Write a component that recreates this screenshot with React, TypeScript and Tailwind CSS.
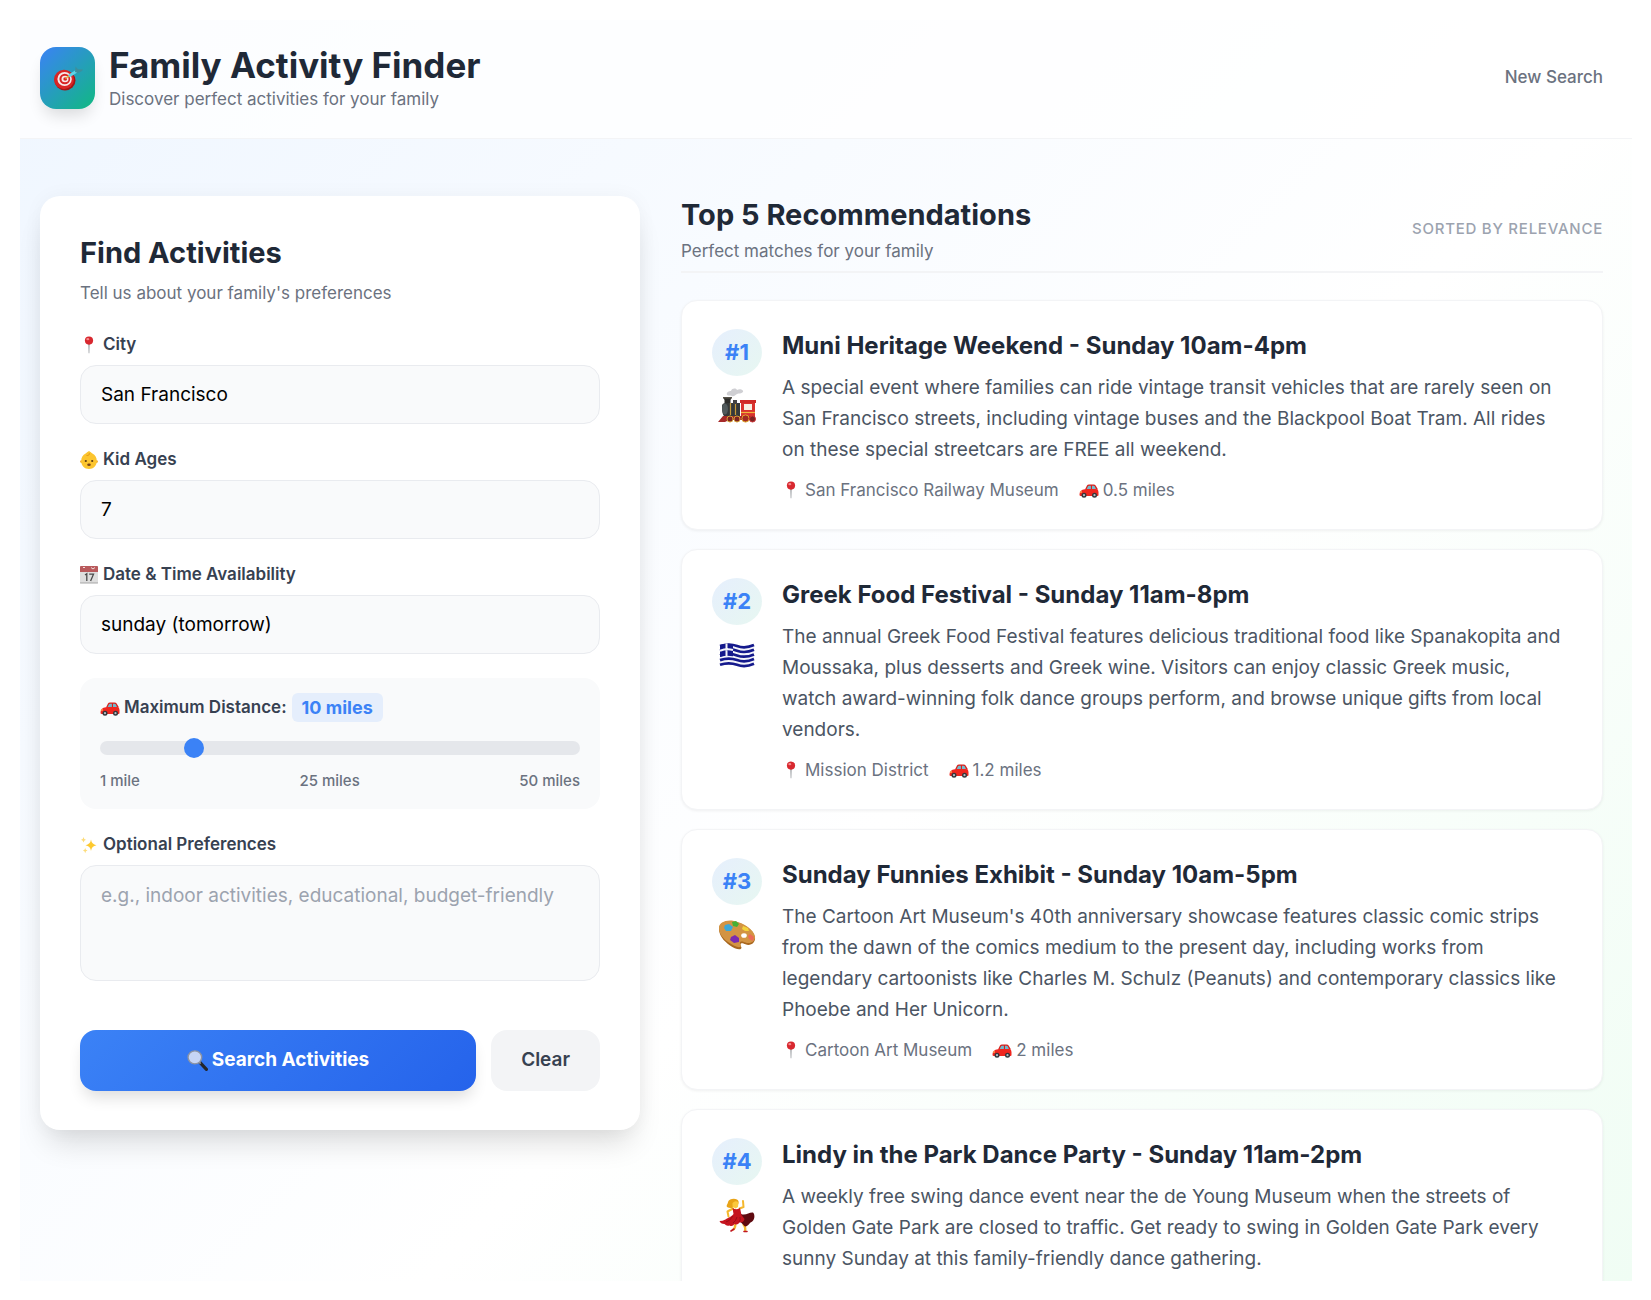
import type { ReactNode } from "react";

function PinIcon({ className }: { className?: string }) {
  return (
    <svg viewBox="0 0 18 18" className={className} aria-hidden="true">
      <path d="M8.4 8h1.2l-.3 9.2h-.6z" fill="#8b8f94" />
      <circle cx="9" cy="4.6" r="4.1" fill="#d8282f" />
      <ellipse cx="7.8" cy="3.2" rx="1.5" ry="1.1" fill="#f58a8c" />
    </svg>
  );
}

function BabyIcon({ className }: { className?: string }) {
  return (
    <svg viewBox="0 0 18 18" className={className} aria-hidden="true">
      <circle cx="1.4" cy="10.6" r="1.3" fill="#f0a92a" />
      <circle cx="16.6" cy="10.6" r="1.3" fill="#f0a92a" />
      <path
        d="M9 0c1.600 1 2.400 1.800 3.400 2.600C15.200 4 16.800 6.600 16.800 10c0 4.500-3.300 8-7.800 8s-7.800-3.500-7.800-8c0-3.400 1.600-6 4.400-7.400C6.600 1.800 7.400 1 9 0z"
        fill="#fcc52f"
      />
      <path d="M6.500 4.400C8.500 4.800 9.700 3.800 9.300 2.200" fill="none" stroke="#d98c14" strokeWidth=".8" />
      <circle cx="5.800" cy="10" r="1.100" fill="#5b3a12" />
      <circle cx="12.200" cy="10" r="1.100" fill="#5b3a12" />
      <ellipse cx="9" cy="13.800" rx="1.800" ry="1.200" fill="#7a4317" />
    </svg>
  );
}

function CalendarIcon({ className }: { className?: string }) {
  return (
    <svg viewBox="0 0 18 18" className={className} aria-hidden="true">
      <rect width="18" height="18" rx="1" fill="#dedede" />
      <path d="M1 0h16a1 1 0 0 1 1 1v5H0V1a1 1 0 0 1 1-1z" fill="#b95a5c" />
      <path d="M3 1.500h2M11 1.500l2 1.500 2-1.500" stroke="#f3dede" fill="none" />
      <path d="M5 9l1.800-1.200V15M9.200 8.200h4.300L10.600 15" fill="none" stroke="#4a4a4a" strokeWidth="1.300" />
      <path d="M0 16.800h18" stroke="#b5b5b5" />
    </svg>
  );
}

function CarIcon({ className }: { className?: string }) {
  return (
    <svg viewBox="0 0 20 18" className={className} aria-hidden="true">
      <path d="M6 8.500 8 4.600Q8.500 3.500 10 3.500h4.500q1.500 0 2.300 1.200L19 8.500z" fill="#d81f1a" />
      <path d="M7.400 8.400 9 5.300q.3-.6 1-.6h1.900v3.700zM13 4.700h1.500q.8 0 1.200.6l1.500 3.100H13z" fill="#74b8cc" />
      <path d="M1 10.500Q3 8 7 8h10.500q2 .5 2 3v3q0 1-1 1H1.500q-1 0-1-1.500z" fill="#f0261f" />
      <circle cx="5" cy="14.200" r="2.500" fill="#33363b" />
      <circle cx="15.500" cy="14.200" r="2.500" fill="#33363b" />
      <circle cx="5" cy="14.200" r="1.100" fill="#b9bec4" />
      <circle cx="15.500" cy="14.200" r="1.100" fill="#b9bec4" />
      <path d="M1 11h2" stroke="#ffd36b" strokeWidth="1" />
    </svg>
  );
}

function SparklesIcon({ className }: { className?: string }) {
  return (
    <svg viewBox="0 0 18 18" className={className} aria-hidden="true">
      <path d="M11 3.500q.6 4.900 5.500 5.700-4.900.8-5.500 5.800-.6-5-5.500-5.800 4.900-.8 5.500-5.700z" fill="#fdc92f" />
      <path
        d="M3.500 1q.3 2.400 2.500 2.800-2.200.4-2.500 2.800Q3.200 4.200 1 3.800 3.200 3.400 3.500 1zM5.200 12q.3 2.200 2.300 2.600-2 .4-2.300 2.600-.3-2.200-2.300-2.600 2-.4 2.300-2.600z"
        fill="#fddc7a"
      />
    </svg>
  );
}

function SearchIcon({ className }: { className?: string }) {
  return (
    <svg viewBox="0 0 20 20" className={className} aria-hidden="true">
      <path d="m12.500 12 6 6.500" stroke="#24262b" strokeWidth="3" strokeLinecap="round" />
      <path d="m11 11 2 2" stroke="#8b8f98" strokeWidth="1.600" />
      <ellipse cx="7.500" cy="7" rx="6.500" ry="6.200" fill="#c6d5f5" stroke="#8d94a3" strokeWidth="1.300" />
    </svg>
  );
}

function TargetIcon({ className }: { className?: string }) {
  return (
    <svg viewBox="0 0 30 26" className={className} aria-hidden="true">
      <ellipse cx="12" cy="15.500" rx="10.500" ry="10" fill="#a31515" />
      <ellipse cx="11" cy="14.500" rx="10" ry="9.700" fill="#d92525" />
      <ellipse cx="11.600" cy="14" rx="7.200" ry="7" fill="#f7e9e9" />
      <ellipse cx="11.800" cy="14" rx="5.400" ry="5.200" fill="#d92525" />
      <ellipse cx="12" cy="14" rx="3.500" ry="3.300" fill="#f7e9e9" />
      <ellipse cx="12.200" cy="14" rx="1.900" ry="1.800" fill="#d92525" />
      <path d="m12.500 13.500 4-3" stroke="#e3b341" strokeWidth="1.500" />
      <path d="m16 11 7.500-4.800" stroke="#5fd3e6" strokeWidth="2.800" />
      <path d="m22 7 .5-5.500 2.500 2.800 5 .2-1 1.500-4 2z" fill="#3d8f9d" />
    </svg>
  );
}

function TrainIcon() {
  return (
    <svg viewBox="0 0 40 36" className="h-9 w-10" aria-hidden="true">
      <path d="M10 7c-1-3 2-4 4-4 1-3 5-3 6-1 3-2 7 0 6 2-2 2-4 1-6 2s-3 3-5 2-3 0-5-1z" fill="#cfcfd3" />
      <path d="M6 9h9l-1.500 3v4h-6v-4z" fill="#2d2d2b" />
      <path d="M6 9h9v1.500H6z" fill="#57534a" />
      <path d="M5 18q0-3 4-3h14v13H7q-2-2-2-10z" fill="#35393a" />
      <ellipse cx="8" cy="21" rx="3" ry="5.500" fill="#515a5c" />
      <path d="M13.500 15v12M18.500 15v12" stroke="#c89b38" strokeWidth="1.200" />
      <path d="M16 12h4v4h-4z" fill="#444" />
      <path d="M23 12h16v3H23z" fill="#cf2a27" />
      <path d="M24 15h14v15H24z" fill="#d9332e" />
      <path d="M27 16h8v6h-8z" fill="#f7efe2" />
      <path d="M24 24.500h14" stroke="#f0b93c" strokeWidth="1.200" />
      <path d="m1 34 5-6h32v4H12l-4 2z" fill="#a62a2a" />
      <circle cx="13" cy="31" r="3" fill="#7d2222" stroke="#d5a239" />
      <circle cx="20" cy="31" r="3" fill="#7d2222" stroke="#d5a239" />
      <circle cx="28.500" cy="30.500" r="3.600" fill="#a12a24" stroke="#e2a82e" />
      <circle cx="35.500" cy="31" r="3" fill="#7d2222" stroke="#c33" />
    </svg>
  );
}

function GreekFlagIcon() {
  return (
    <svg viewBox="0 0 40 36" className="h-9 w-10" aria-hidden="true">
      <path d="M3 8q9-3 17 0t17-1v20q-9 3-17 1T3 29z" fill="#f3f4fa" />
      <g fill="none" stroke="#14198c" strokeWidth="2.700">
        <path d="M3 9q9-3 17 0t17-1" />
        <path d="M3 13.700q9-3 17 0t17-1" />
        <path d="M3 18.400q9-3 17 0t17-1" />
        <path d="M3 23.100q9-3 17 0t17-1" />
        <path d="M3 27.800q9-3 17 0t17-1" />
      </g>
      <path d="M3 8q7-2.300 13-.7v12Q10 17.700 3 20z" fill="#14198c" />
      <path d="M9.500 6.500v12.800M3 13.700q7-2.300 13-.7" stroke="#f3f4fa" strokeWidth="2" fill="none" />
    </svg>
  );
}

function PaletteIcon() {
  return (
    <svg viewBox="0 0 40 36" className="h-9 w-10" aria-hidden="true">
      <path
        d="M2 12C2 6 9 3 17 4.500c10 1.800 20 9 21 16 .8 5-4.500 9-9.500 6.800-2.500-1-4.500-1.800-5 0-.3 2 2 3 .5 4.500-2 1.500-7-.5-11-3.300C6.500 24 2 18 2 12z"
        fill="#a8671f"
      />
      <path
        d="M2 11C2 5.500 9 2.500 17 4c10 1.800 20 9 21 15.500.7 4.500-4.500 8-9.500 6-2.500-1-5-1.800-5.500 0-.3 2 2 3 .5 4.300-2 1.200-6.500-.7-10.500-3.500C6.500 22.500 2 17 2 11z"
        fill="#d39443"
      />
      <ellipse cx="27" cy="18.500" rx="2.800" ry="2.300" fill="#fff" />
      <path d="M8 8l4-1 4 3-2 4-5 0-2-3z" fill="#3aa8d8" />
      <path d="M15 5l4-1 3 3-2 3-4-1z" fill="#45b035" />
      <path d="M26 9l5 2 1 3-4 0-3-2z" fill="#f3d33b" />
      <path d="M33 17l4 3-1 4-4-2-1-3z" fill="#ec6a58" />
      <path d="M14 20l4-2 4 3 0 4-5 1-4-3z" fill="#7a2bb0" />
    </svg>
  );
}

function DancerIcon() {
  return (
    <svg viewBox="0 0 40 36" className="h-9 w-10" aria-hidden="true">
      <path
        d="M16 11.500 10.500 14.500l1 5M22.500 11.500l4-1.500-.5-6"
        fill="none"
        stroke="#f5b82e"
        strokeWidth="2"
        strokeLinecap="round"
        strokeLinejoin="round"
      />
      <path d="M18 27q1 3-2 6M26 27q3 3 2 7" fill="none" stroke="#f5b82e" strokeWidth="2.400" />
      <path d="M10 10c-1-2 1-3 1-5 1-3 6-4 9-2.500 2 1 2 3 1 5L16 10.500c-2 1-4 .5-6-.5z" fill="#e8a317" />
      <path d="M15.500 6q3-3 6-.5l-.5 4.500-2.500 1.500-3-2z" fill="#fbc83c" />
      <path
        d="M24 17c5 2 8-2 12-1.500 2.500 2.500 1.500 8-1.500 9.500-2 0-2 4-6.500 4.500l-6-6z"
        fill="#5f0a10"
      />
      <path
        d="M15.500 11q4 2.500 7.500 0l1.500 7 3 4q-1 4-5 3.500-2 3-5 1.500-2 3-5 1.500-3 1-5-1.500-4 0-5-3 3 0 6-1.500c3-2 5-2 8-5.500z"
        fill="#c5141f"
      />
      <path d="M16 19q-3 5-7 6M20 20q-1 4-4 6M23 20q1 3-1 5" fill="none" stroke="#8e0c15" strokeWidth=".8" />
      <path d="m17 32-3 2M27 34.500h3" stroke="#c01722" strokeWidth="1.600" strokeLinecap="round" />
    </svg>
  );
}

type Activity = {
  title: string;
  description: string;
  location?: string;
  distance?: string;
  icon: ReactNode;
};

const activities: Activity[] = [
  {
    title: "Muni Heritage Weekend - Sunday 10am-4pm",
    description:
      "A special event where families can ride vintage transit vehicles that are rarely seen on San Francisco streets, including vintage buses and the Blackpool Boat Tram. All rides on these special streetcars are FREE all weekend.",
    location: "San Francisco Railway Museum",
    distance: "0.5 miles",
    icon: <TrainIcon />,
  },
  {
    title: "Greek Food Festival - Sunday 11am-8pm",
    description:
      "The annual Greek Food Festival features delicious traditional food like Spanakopita and Moussaka, plus desserts and Greek wine. Visitors can enjoy classic Greek music, watch award-winning folk dance groups perform, and browse unique gifts from local vendors.",
    location: "Mission District",
    distance: "1.2 miles",
    icon: <GreekFlagIcon />,
  },
  {
    title: "Sunday Funnies Exhibit - Sunday 10am-5pm",
    description:
      "The Cartoon Art Museum's 40th anniversary showcase features classic comic strips from the dawn of the comics medium to the present day, including works from legendary cartoonists like Charles M. Schulz (Peanuts) and contemporary classics like Phoebe and Her Unicorn.",
    location: "Cartoon Art Museum",
    distance: "2 miles",
    icon: <PaletteIcon />,
  },
  {
    title: "Lindy in the Park Dance Party - Sunday 11am-2pm",
    description:
      "A weekly free swing dance event near the de Young Museum when the streets of Golden Gate Park are closed to traffic. Get ready to swing in Golden Gate Park every sunny Sunday at this family-friendly dance gathering.",
    icon: <DancerIcon />,
  },
];

const fieldClass =
  "w-full rounded-2xl border border-[#e9ebef] bg-[#f9fafb] px-5 text-[19px] text-black placeholder:text-[#9ca3af]";

function Field({
  id,
  label,
  icon,
  children,
}: {
  id: string;
  label: string;
  icon: ReactNode;
  children: ReactNode;
}) {
  return (
    <div className="flex flex-col gap-2">
      <label
        htmlFor={id}
        className="flex h-6 items-center gap-[5px] text-[17px] font-semibold text-[#374151]"
      >
        {icon}
        {label}
      </label>
      {children}
    </div>
  );
}

function SearchForm() {
  return (
    <form className="flex flex-col gap-6 rounded-[20px] bg-white px-10 py-[39px] shadow-[0_20px_30px_-8px_rgba(0,0,0,0.14),0_0_20px_rgba(0,0,0,0.04)]">
      <div className="mb-1">
        <h2 className="text-[29px] leading-9 font-bold text-[#1f2937]">Find Activities</h2>
        <p className="mt-2.5 text-[17px] leading-6 text-[#6b7280]">
          Tell us about your family's preferences
        </p>
      </div>
      <Field id="city" label="City" icon={<PinIcon className="size-[18px]" />}>
        <input id="city" defaultValue="San Francisco" className={`${fieldClass} h-[59px]`} />
      </Field>
      <Field id="ages" label="Kid Ages" icon={<BabyIcon className="size-[18px]" />}>
        <input id="ages" defaultValue="7" className={`${fieldClass} h-[59px]`} />
      </Field>
      <Field
        id="date"
        label="Date & Time Availability"
        icon={<CalendarIcon className="size-[18px]" />}
      >
        <input id="date" defaultValue="sunday (tomorrow)" className={`${fieldClass} h-[59px]`} />
      </Field>
      <div className="rounded-2xl bg-[#f9fafb] px-5 pt-[15px] pb-[18px]">
        <label
          htmlFor="distance"
          className="flex items-center gap-[5px] text-[17px] font-semibold text-[#374151]"
        >
          <span className="flex items-center gap-1">
            <CarIcon className="h-[18px] w-5" />
            Maximum Distance:
          </span>
          <span className="rounded-md bg-[#e5eefc] px-2.5 text-lg leading-[29px] font-bold text-[#3b82f6]">
            10 miles
          </span>
        </label>
        <input
          id="distance"
          type="range"
          min={1}
          max={50}
          defaultValue={10}
          className="mt-[19px] block h-3.5 w-full appearance-none rounded-full bg-[#e5e7eb] [&::-webkit-slider-thumb]:size-5 [&::-webkit-slider-thumb]:appearance-none [&::-webkit-slider-thumb]:rounded-full [&::-webkit-slider-thumb]:bg-[#3b82f6]"
        />
        <div className="mt-4 flex justify-between text-[15px] leading-5 font-medium text-[#6b7280]">
          <span>1 mile</span>
          <span>25 miles</span>
          <span>50 miles</span>
        </div>
      </div>
      <Field
        id="preferences"
        label="Optional Preferences"
        icon={<SparklesIcon className="size-[18px]" />}
      >
        <textarea
          id="preferences"
          placeholder="e.g., indoor activities, educational, budget-friendly"
          className={`${fieldClass} h-[116px] resize-none py-4`}
        />
      </Field>
      <div className="mt-[25px] flex gap-[15px]">
        <button
          type="button"
          className="flex h-[61px] flex-1 items-center justify-center gap-1 rounded-2xl bg-[linear-gradient(135deg,#3b82f6,#2563eb)] text-[19px] font-bold text-white shadow-[0_10px_16px_-4px_rgba(0,0,0,0.14)]"
        >
          <SearchIcon className="size-[21px]" />
          Search Activities
        </button>
        <button
          type="button"
          className="h-[61px] rounded-2xl bg-[#f3f4f6] px-[30px] text-[19px] font-semibold text-[#374151]"
        >
          Clear
        </button>
      </div>
    </form>
  );
}

function ActivityCard({ rank, activity }: { rank: number; activity: Activity }) {
  return (
    <li className="flex gap-5 rounded-2xl border border-[#f3f4f6] bg-white px-[30px] pt-7 pb-[27px] shadow-[0_1px_3px_rgba(0,0,0,0.06)]">
      <div className="flex w-[50px] shrink-0 flex-col items-center gap-3">
        <span className="flex h-[47px] w-[50px] items-center justify-center rounded-[50%] bg-[linear-gradient(135deg,#e6effd,#e7f7f1)] text-[22px] font-bold text-[#3b82f6]">
          #{rank}
        </span>
        {activity.icon}
      </div>
      <div className="min-w-0 flex-1">
        <h3 className="text-2xl leading-[34px] font-bold text-[#1f2937]">{activity.title}</h3>
        <p className="mt-[9px] pr-1.5 text-[19px] leading-[31px] text-[#4b5563]">
          {activity.description}
        </p>
        {activity.location && (
          <div className="mt-[13px] flex gap-5 text-[17px] leading-6 text-[#6b7280]">
            <span className="flex items-center gap-[5px]">
              <PinIcon className="size-[18px]" />
              {activity.location}
            </span>
            <span className="flex items-center gap-1">
              <CarIcon className="h-[18px] w-5" />
              {activity.distance}
            </span>
          </div>
        )}
      </div>
    </li>
  );
}

export default function App() {
  return (
    <div className="h-screen bg-white pt-5 pr-[19px] pb-[19px] pl-5 font-[Inter,sans-serif]">
      <div className="h-full overflow-y-auto bg-[linear-gradient(135deg,#eff6ff,#ffffff_58%,#f0fdf4)] [scrollbar-width:none]">
        <header className="flex h-[119px] items-center justify-between border-b border-[#f3f4f6] bg-white/80 pr-[29px] pb-[3px] pl-5">
          <div className="flex items-center gap-3.5">
            <div className="flex h-[62px] w-[55px] items-center justify-center rounded-2xl bg-[linear-gradient(135deg,#3b82f6,#10b981)] shadow-[0_10px_16px_-4px_rgba(0,0,0,0.14)]">
              <TargetIcon className="h-[26px] w-[30px]" />
            </div>
            <div>
              <h1 className="text-[35px] leading-10 font-bold text-[#1f2937]">
                Family Activity Finder
              </h1>
              <p className="mt-0.5 text-[17px] leading-6 text-[#6b7280]">
                Discover perfect activities for your family
              </p>
            </div>
          </div>
          <a href="#" className="text-[17px] font-medium text-[#6b7280]">
            New Search
          </a>
        </header>
        <main className="grid grid-cols-[600fr_922fr] items-start gap-x-[41px] pt-[57px] pr-[29px] pb-10 pl-5">
          <SearchForm />
          <section>
            <div className="flex items-center justify-between border-b-2 border-[#f3f4f6] pb-2">
              <div>
                <h2 className="text-[29px] leading-[38px] font-bold text-[#1f2937]">
                  Top 5 Recommendations
                </h2>
                <p className="mt-[5px] text-[17px] leading-6 text-[#6b7280]">
                  Perfect matches for your family
                </p>
              </div>
              <span className="text-[15px] font-medium tracking-wider text-[#9ca3af] uppercase">
                Sorted by relevance
              </span>
            </div>
            <ol className="mt-[27px] flex flex-col gap-[19px]">
              {activities.map((activity, i) => (
                <ActivityCard key={activity.title} rank={i + 1} activity={activity} />
              ))}
            </ol>
          </section>
        </main>
      </div>
    </div>
  );
}
